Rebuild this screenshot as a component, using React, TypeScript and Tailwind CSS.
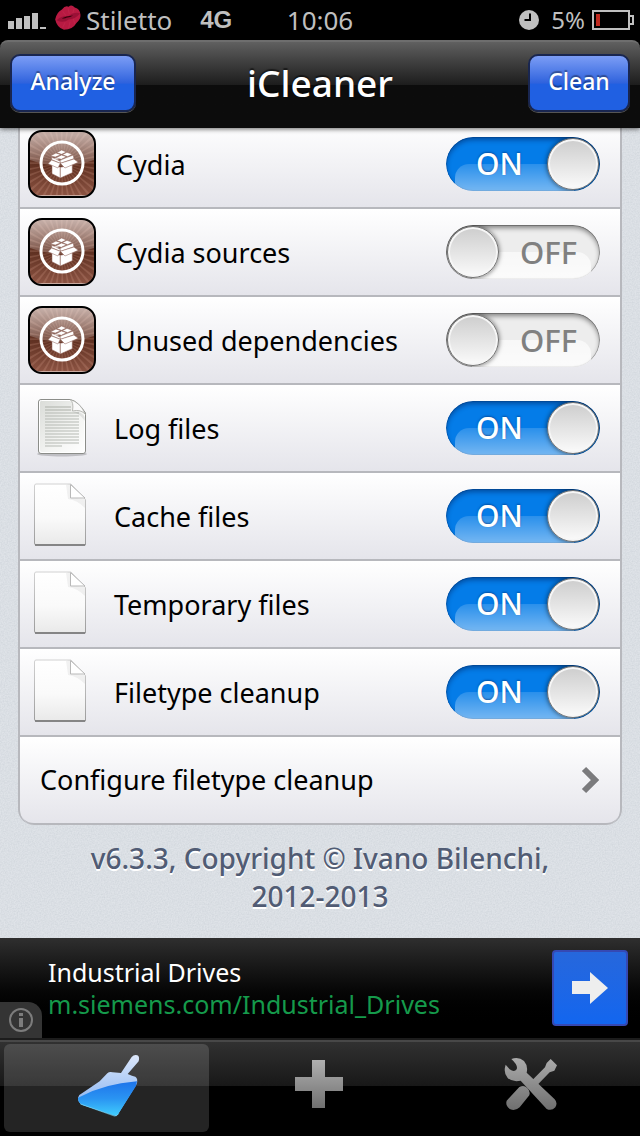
import { useState } from "react";
import type { ReactNode } from "react";

function CydiaIcon({ id }: { id: string }) {
  const rays = Array.from({ length: 36 }, (_, i) => i * 10);
  return (
    <svg viewBox="0 0 68 68" className="h-[68px] w-[68px] shrink-0" aria-hidden="true">
      <defs>
        <linearGradient id={`${id}-base`} x1="0" y1="0" x2="0" y2="1">
          <stop offset="0" stopColor="#94695c" />
          <stop offset="0.5" stopColor="#5f3021" />
          <stop offset="1" stopColor="#8f5645" />
        </linearGradient>
        <linearGradient id={`${id}-gloss`} x1="0" y1="0" x2="0" y2="1">
          <stop offset="0" stopColor="#fff" stopOpacity="0.5" />
          <stop offset="1" stopColor="#fff" stopOpacity="0.14" />
        </linearGradient>
        <clipPath id={`${id}-clip`}>
          <rect x="1" y="1" width="66" height="66" rx="13" />
        </clipPath>
      </defs>
      <g clipPath={`url(#${id}-clip)`}>
        <rect width="68" height="68" fill={`url(#${id}-base)`} />
        {rays.map((a) => (
          <path key={a} d="M34 33 L32 -16 L35 -16 Z" fill="#e8b09c" opacity="0.2" transform={`rotate(${a} 34 33)`} />
        ))}
        <path d="M0 0 H68 V29 Q34 43 0 29 Z" fill={`url(#${id}-gloss)`} />
        <path d="M8 66 H60" stroke="#c9aaa0" strokeWidth="2" />
      </g>
      <rect x="1" y="1" width="66" height="66" rx="13" fill="none" stroke="#000" strokeWidth="2" />
      <circle cx="34" cy="33" r="21" fill="none" stroke="#fff" strokeWidth="3" />
      <g transform="translate(-2 -3.300) scale(0.333)" fill="#fff" stroke="#8a5c50" strokeWidth="1.500" strokeLinejoin="round">
        <path d="M78 112 L103 122 V154 L78 141 Z" />
        <path d="M103 122 L139 114 V138 L103 154 Z" />
        <path d="M80 96 L95 90 L108 94 L92 101 Z" />
        <path d="M73 88 L90 79 L105 84 L88 91 Z M92 78 L107 70 L121 76 L107 83 Z" />
        <path d="M90 93 L107 85 L122 90 L106 98 Z M109 84 L123 77 L139 83 L125 90 Z" />
        <path d="M100 103 L109 98 L124 92 L142 85 L144 96 L104 110 Z" />
        <path d="M77 92 L88 96 L103 104 V110 L77 99 Z" />
        <path d="M77 100 L103 110 L96 124 L66 111 Z" />
        <path d="M103 110 L144 97 L157 107 L117 124 Z" />
      </g>
    </svg>
  );
}

function LogIcon() {
  const lines = [14, 17, 20, 23, 26, 29, 32, 35, 38, 41, 44, 47];
  return (
    <svg viewBox="0 1 66 68" className="h-[68px] w-[66px] shrink-0" aria-hidden="true">
      <defs>
        <linearGradient id="log-paper" x1="0" y1="0" x2="1" y2="1">
          <stop offset="0" stopColor="#d9dbd7" />
          <stop offset="0.6" stopColor="#f4f5f3" />
          <stop offset="1" stopColor="#ffffff" />
        </linearGradient>
      </defs>
      <ellipse cx="34" cy="61" rx="25" ry="2.500" fill="#000" opacity="0.18" />
      <path d="M13 6.500 H42 Q50 8 57.500 20 V58 Q57.500 60.500 55 60.500 H13 Q10.500 60.500 10.500 58 V9 Q10.500 6.500 13 6.500 Z" fill="url(#log-paper)" stroke="#8b8d89" />
      <path d="M13.500 7.500 H42 Q49 9 56.500 20.500 V57 Q56.500 59.500 54 59.500 H14 Q11.500 59.500 11.500 57 V9 Q11.500 7.500 13.500 7.500 Z" fill="none" stroke="#fff" />
      {lines.map((y, i) => (
        <path key={y} d={`M17 ${y} H${i < 2 ? 43 : 51}`} stroke="#b6b9b3" strokeWidth="1.200" />
      ))}
      <path d="M17 50 H51 M17 53 H34" stroke="#b6b9b3" strokeWidth="1.200" />
      <path d="M42 6.500 Q46 9 44.500 18 Q53 16 57.500 21.500 Q52 9 42 6.500 Z" fill="#fafafa" stroke="#a8aaa5" strokeWidth="0.800" />
      <path d="M45 19 Q53 18 57 24 V28 Q51 20 45 19 Z" fill="#000" opacity="0.08" />
    </svg>
  );
}

function FileIcon({ id }: { id: string }) {
  return (
    <svg viewBox="0 1 66 68" className="h-[68px] w-[66px] shrink-0" aria-hidden="true">
      <defs>
        <linearGradient id={`${id}-paper`} x1="0" y1="0" x2="0" y2="1">
          <stop offset="0" stopColor="#ffffff" />
          <stop offset="0.55" stopColor="#fafafa" />
          <stop offset="1" stopColor="#e9e9e9" />
        </linearGradient>
        <linearGradient id={`${id}-edge`} x1="0" y1="0" x2="0" y2="1">
          <stop offset="0" stopColor="#d2d2d2" />
          <stop offset="1" stopColor="#9c9c9c" />
        </linearGradient>
      </defs>
      <path d="M8 3 H43 L57.500 18.500 V64 H8 Q6.500 64 6.500 62 V5 Q6.500 3 8 3 Z" fill={`url(#${id}-paper)`} stroke={`url(#${id}-edge)`} />
      <path d="M38 4 L42 3 V16 L57 18 V27 Q49 19 40 18 Z" fill="#000" opacity="0.05" />
      <path d="M42.500 3.500 V17 H57 Z" fill="#fff" stroke="#b9b9b9" strokeLinejoin="round" />
      <path d="M7 64 H57" stroke="#707070" strokeWidth="1.500" />
    </svg>
  );
}

function Toggle({ id, initial }: { id: string; initial: boolean }) {
  const [on, setOn] = useState(initial);
  return (
    <span className="grid h-[54px] w-[154px] shrink-0 overflow-hidden rounded-full">
      <input
        id={id}
        type="checkbox"
        checked={on}
        onChange={() => setOn(!on)}
        className="col-start-1 row-start-1 m-0 h-full w-full cursor-pointer appearance-none rounded-full bg-[#ededed] shadow-[inset_0_3px_5px_rgba(0,0,0,0.45),inset_0_0_0_1px_rgba(0,0,0,0.25)] checked:bg-[#047ce8] checked:shadow-[inset_0_3px_5px_rgba(0,20,70,0.45),inset_0_0_0_1px_rgba(0,40,90,0.2)]"
      />
      <span
        className={
          on
            ? "pointer-events-none col-start-1 row-start-1 mr-[26px] ml-[9px] h-[27px] self-end rounded-tl-[14px] rounded-bl-[4px] bg-linear-to-b from-white/15 to-white/45"
            : "pointer-events-none col-start-1 row-start-1 mr-[9px] ml-[26px] h-[27px] self-end rounded-tr-[14px] rounded-br-[4px] bg-linear-to-b from-white/60 to-white/80"
        }
      />
      <span
        aria-hidden="true"
        className={
          on
            ? "pointer-events-none col-start-1 row-start-1 flex items-center justify-between pr-[1px] pl-[30px] text-[30px] leading-[54px] font-medium text-white [text-shadow:0_-1px_2px_rgba(0,50,120,0.6)]"
            : "pointer-events-none col-start-1 row-start-1 flex flex-row-reverse items-center justify-between pr-[23px] pl-[1px] text-[31px] leading-[54px] font-medium text-[#808080]"
        }
      >
        {on ? "ON" : "OFF"}
        <span className="h-[52px] w-[52px] rounded-full border border-[#707070] bg-linear-to-b from-[#cdcdcd] to-[#fbfbfb] shadow-[inset_0_0_0_2px_#f6f6f6,0_0_5px_rgba(0,0,0,0.6)]" />
      </span>
    </span>
  );
}

const rowClass =
  "flex h-[88px] items-center border-b-2 border-[#b7b8bd] bg-linear-to-b from-white to-[#e5e5eb]";

function SwitchRow({ id, label, on, icon }: { id: string; label: string; on: boolean; icon: ReactNode }) {
  return (
    <li className={`${rowClass} pr-5 pl-2`}>
      {icon}
      <label htmlFor={id} className="ml-5 flex-1 pt-[2px] text-[27px] leading-9 text-black">
        {label}
      </label>
      <Toggle id={id} initial={on} />
    </li>
  );
}

const blueButton =
  "h-[58px] rounded-[10px] border-2 border-[#192650] bg-linear-to-b from-[#7c9df5] from-0% via-[#2f62dd] via-50% to-[#2060e2] to-52% pb-1 text-[23px] font-medium text-white shadow-[0_1px_0_#555] [text-shadow:0_-2px_1px_rgba(0,0,0,0.35)]";

function StatusBar() {
  return (
    <div className="grid h-10 grid-cols-[1fr_auto_1fr] items-center bg-black text-[26px] leading-10 text-[#bfbfbf]">
      <div className="flex items-center pl-2">
        <svg viewBox="0 0 38 18" className="h-[18px] w-[38px]" fill="#bfbfbf" aria-hidden="true">
          <path d="M0 10h6v8H0z M8 7h6v11H8z M16 5h6v13H16z M24 2h6v16H24z M32 16h6v2H32z" />
        </svg>
        <svg viewBox="165 12 82 80" className="mb-[5px] ml-2 h-[27px] w-7" aria-hidden="true">
          <path d="M168 58 Q172 36 188 28 Q198 15 208 20 Q216 12 226 22 Q242 26 243 44 Q244 58 231 68 Q220 88 194 88 Q174 84 168 58Z" fill="#b81a42" />
          <path d="M172 60 Q190 45 207 48 Q224 34 242 40 Q228 56 208 58 Q192 70 172 60Z" fill="#9a1036" />
          <path d="M188 54 Q200 48 221 46 Q210 53 203 52 Q196 56 188 54Z" fill="#300008" />
          <path d="M190 34 L200 46 M206 24 L210 42 M224 26 L220 40 M190 82 L198 66 M208 84 L212 64 M226 72 L222 56" stroke="#cd3459" strokeWidth="3" opacity="0.35" />
        </svg>
        <span className="ml-1">Stiletto</span>
        <span className="ml-7 font-['Liberation_Sans',sans-serif] text-[24px] font-bold">4G</span>
      </div>
      <time>10:06</time>
      <div className="flex items-center justify-end pr-[6px]">
        <svg viewBox="0 0 20 20" className="h-5 w-5" aria-hidden="true">
          <circle cx="10" cy="10" r="10" fill="#bfbfbf" />
          <path d="M11 3.500V10H5.500" fill="none" stroke="#000" strokeWidth="2" />
        </svg>
        <span className="ml-3 text-[24px]">5%</span>
        <svg viewBox="0 0 42 20" className="ml-[7px] h-5 w-[42px]" aria-hidden="true">
          <path d="M1 1H37V19H1Z M38 6H41V14H38" fill="none" stroke="#bfbfbf" strokeWidth="2" />
          <rect x="4" y="4" width="4" height="12" fill="#c02a20" />
        </svg>
      </div>
    </div>
  );
}

function Noise() {
  return (
    <svg className="absolute inset-0 h-full w-full" aria-hidden="true">
      <filter id="noise">
        <feTurbulence type="fractalNoise" baseFrequency="0.7" numOctaves="2" stitchTiles="stitch" />
        <feColorMatrix values="0 0 0 0 0.45  0 0 0 0 0.5  0 0 0 0 0.55  0.5 0 0 0 -0.14" />
      </filter>
      <rect width="100%" height="100%" filter="url(#noise)" />
    </svg>
  );
}

function Dustpan() {
  return (
    <svg viewBox="228 372 192 192" className="h-16 w-16" aria-hidden="true">
      <defs>
        <linearGradient id="pan" x1="0" y1="0" x2="0" y2="1">
          <stop offset="0" stopColor="#1e74ea" />
          <stop offset="0.5" stopColor="#2a94f2" />
          <stop offset="1" stopColor="#40cdfd" />
        </linearGradient>
        <linearGradient id="pan-top" x1="0" y1="0" x2="0" y2="1">
          <stop offset="0" stopColor="#dce7fa" />
          <stop offset="1" stopColor="#78aaf0" />
        </linearGradient>
      </defs>
      <path d="M231 503 Q233 494 243 490 L296 454 L319 430 Q325 424 335 427 L360 429 L392 381 Q399 373 409 376 Q417 380 413 394 L380 432 Q394 438 403 440 Q412 446 407 462 L352 551 Q347 560 338 556 L245 525 Q230 517 231 503Z" fill="url(#pan-top)" />
      <path d="M231 503 Q310 461 408 454 L405 468 L352 551 Q347 560 338 556 L245 525 Q230 517 231 503Z" fill="url(#pan)" />
      <path d="M238 522 L340 558 Q348 559 353 551" fill="none" stroke="#7be0ff" strokeWidth="2" />
    </svg>
  );
}

function Plus() {
  return (
    <svg viewBox="0 0 52 50" className="h-[50px] w-[52px]" aria-hidden="true">
      <defs>
        <linearGradient id="plus" x1="0" y1="0" x2="0" y2="1">
          <stop offset="0" stopColor="#b0b0b0" />
          <stop offset="1" stopColor="#707070" />
        </linearGradient>
      </defs>
      <path d="M20 1H33V18H51V32H33V49H20V32H3V18H20Z" fill="url(#plus)" />
    </svg>
  );
}

function Tools() {
  return (
    <svg viewBox="554 384 162 162" className="h-[54px] w-[54px]" aria-hidden="true">
      <defs>
        <linearGradient id="tools" gradientUnits="userSpaceOnUse" x1="0" y1="386" x2="0" y2="545">
          <stop offset="0" stopColor="#acacac" />
          <stop offset="1" stopColor="#6e6e6e" />
        </linearGradient>
      </defs>
      <g fill="url(#tools)">
        <path d="M694 390 L713 409 L705 425 L691 430 L654 468 L640 452 L677 415 L682 402Z" />
        <path d="M600 474 Q614 466 624 477 Q634 487 630 499 L601 535 Q588 547 573 541 Q557 531 562 515Z" />
        <path d="M576 390 Q598 382 614 396 Q627 411 622 431 L706 511 Q716 522 708 535 Q697 547 682 540 L604 455 Q579 460 565 447 Q551 431 559 407 L571 421 Q585 431 592 421 Q597 409 576 390Z" />
      </g>
    </svg>
  );
}

export default function App() {
  const [tab, setTab] = useState(0);
  const tabs = [
    { name: "Clean", icon: <Dustpan /> },
    { name: "Add", icon: <Plus /> },
    { name: "Tools", icon: <Tools /> },
  ];
  return (
    <div className="flex min-h-screen flex-col bg-black font-['Noto_Sans',sans-serif]">
      <StatusBar />
      <header className="relative z-10 grid h-[88px] grid-cols-[1fr_auto_1fr] items-center rounded-t-lg border-t-2 border-[#6e6e6e] bg-linear-to-b from-[#606060] from-0% via-[#1d1d1d] via-50% to-[#0c0c0c] to-50% px-[10px] pb-1 shadow-[0_1px_5px_rgba(0,0,0,0.6)]">
        <button type="button" className={`${blueButton} w-[126px] justify-self-start`}>Analyze</button>
        <h1 className="text-[37px] leading-[48px] font-medium text-white [text-shadow:0_-2px_1px_rgba(0,0,0,0.5)]">iCleaner</h1>
        <button type="button" className={`${blueButton} w-[102px] justify-self-end`}>Clean</button>
      </header>

      <main className="relative flex-1 overflow-hidden bg-[#dfe3e8]">
        <Noise />
        <div className="relative px-[18px]">
          <ul className="-mt-[7px] overflow-hidden rounded-b-2xl border-x-2 border-[#b7b8bd]">
            <SwitchRow id="cydia" label="Cydia" on icon={<CydiaIcon id="c1" />} />
            <SwitchRow id="sources" label="Cydia sources" on={false} icon={<CydiaIcon id="c2" />} />
            <SwitchRow id="deps" label="Unused dependencies" on={false} icon={<CydiaIcon id="c3" />} />
            <SwitchRow id="logs" label="Log files" on icon={<LogIcon />} />
            <SwitchRow id="cache" label="Cache files" on icon={<FileIcon id="f1" />} />
            <SwitchRow id="temp" label="Temporary files" on icon={<FileIcon id="f2" />} />
            <SwitchRow id="filetype" label="Filetype cleanup" on icon={<FileIcon id="f3" />} />
            <li>
              <a href="#configure" className={`${rowClass} justify-between rounded-b-[14px] px-5 text-[27px] leading-9 text-black`}>
                Configure filetype cleanup
                <svg viewBox="0 0 20 28" className="h-7 w-5" aria-hidden="true">
                  <path d="M4 3L15 14L4 25" fill="none" stroke="#7b7b7d" strokeWidth="6" />
                </svg>
              </a>
            </li>
          </ul>
          <p className="mx-auto mt-[14px] max-w-[500px] text-center text-[28px] leading-[38px] font-medium text-[#515c74] [text-shadow:0_2px_0_#fff]">
            v6.3.3, Copyright © Ivano Bilenchi, 2012-2013
          </p>
        </div>
      </main>

      <aside className="relative flex h-[100px] items-center justify-between bg-linear-to-b from-[#2f2f2f] to-black to-90% pr-3 pl-12">
        <div className="text-[25px] leading-8">
          <p className="text-white">Industrial Drives</p>
          <a href="#ad" className="text-[#159a4b]">m.siemens.com/Industrial_Drives</a>
        </div>
        <button type="button" aria-label="Open" className="flex h-[76px] w-[76px] items-center justify-center rounded-[4px] border-2 border-[#3549b4] bg-linear-to-b from-[#2667dc] to-[#1266ef]">
          <svg viewBox="0 0 36 32" className="h-8 w-9" fill="#eeeeee" aria-hidden="true">
            <path d="M0 9H18V0L36 16L18 32V22H0Z" />
          </svg>
        </button>
        <button type="button" aria-label="Ad information" className="absolute bottom-0 left-0 flex h-9 w-[42px] items-center justify-center rounded-tr-[14px] bg-[#343434]">
          <svg viewBox="0 0 24 24" className="h-6 w-6" aria-hidden="true">
            <circle cx="12" cy="12" r="11" fill="none" stroke="#7c7c7c" strokeWidth="2" />
            <path d="M12 5V8 M12 10V19" stroke="#7c7c7c" strokeWidth="4" />
          </svg>
        </button>
      </aside>

      <nav className="grid h-[98px] grid-cols-3 gap-2 border-t-2 border-[#1c1c1c] bg-linear-to-b from-[#323232] from-0% via-[#181818] via-48% to-black to-48% px-1 pt-1 pb-1 shadow-[inset_0_2px_0_#484848]">
        {tabs.map((t, i) => (
          <button
            key={t.name}
            type="button"
            aria-label={t.name}
            onClick={() => setTab(i)}
            className={
              tab === i
                ? "flex items-center justify-center rounded-md bg-white/14 pb-1 pl-1"
                : "flex items-center justify-center rounded-md pr-1 pb-2"
            }
          >
            {t.icon}
          </button>
        ))}
      </nav>
    </div>
  );
}
